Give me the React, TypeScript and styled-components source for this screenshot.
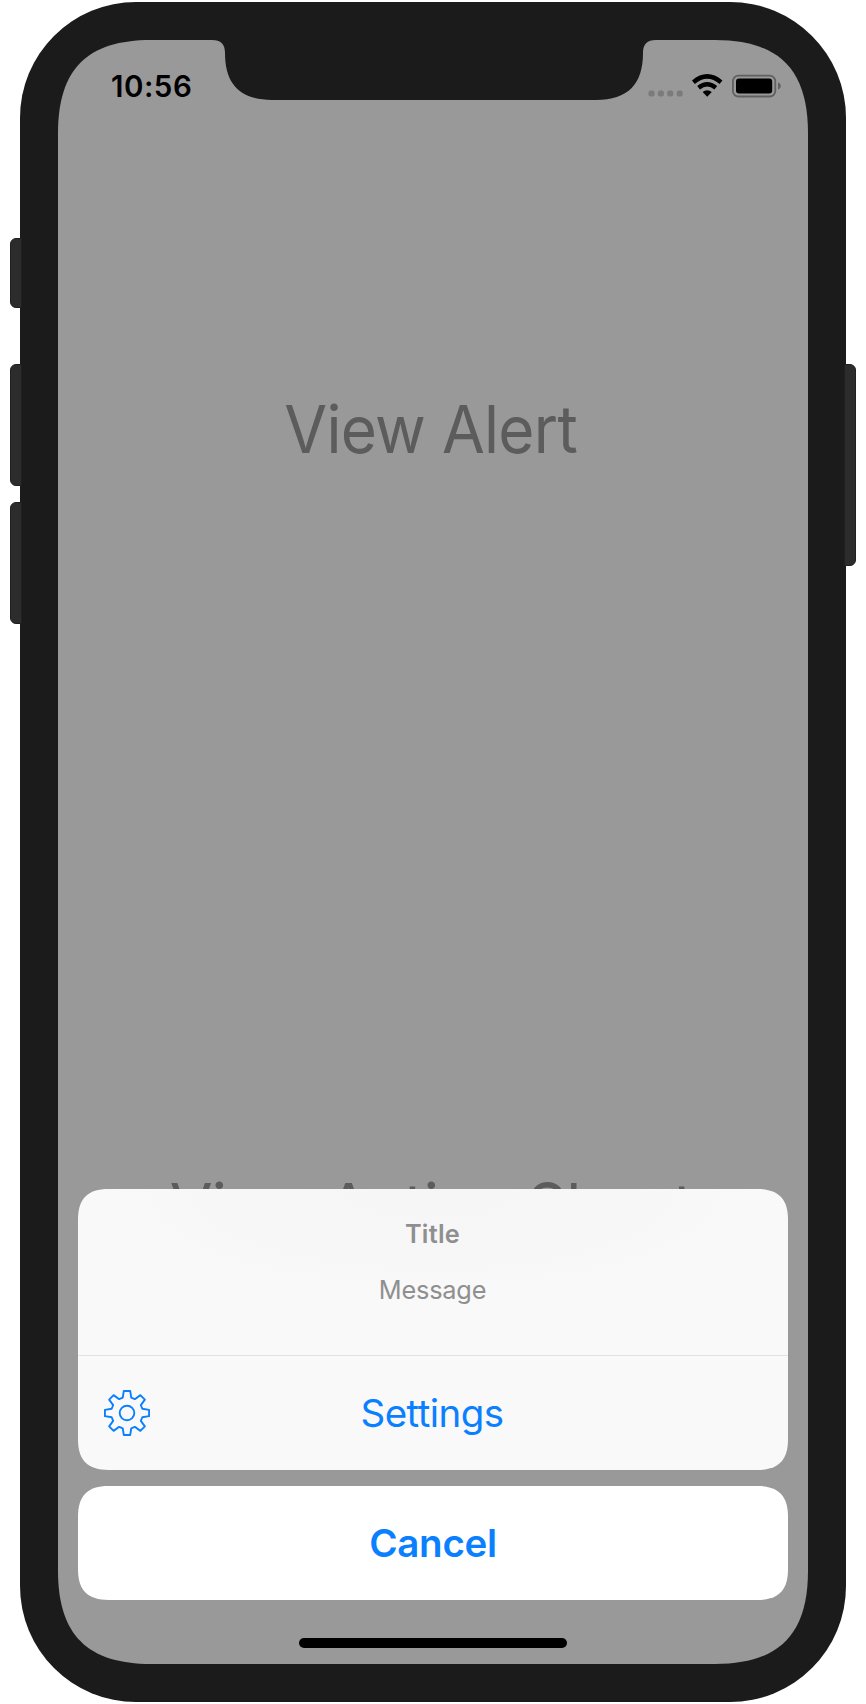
import React from "react";
import styled, { createGlobalStyle } from "styled-components";

/* Rounded rectangle whose corners ease into the straight edges, usable as a clip-path. */
const smoothRect = (w: number, h: number, r: number) => {
  const a = 1.18 * r;
  const c = 0.37 * r;
  return [
    `M${a} 0L${w - a} 0`,
    `C${w - c} 0 ${w} ${c} ${w} ${a}`,
    `L${w} ${h - a}`,
    `C${w} ${h - c} ${w - c} ${h} ${w - a} ${h}`,
    `L${a} ${h}`,
    `C${c} ${h} 0 ${h - c} 0 ${h - a}`,
    `L0 ${a}`,
    `C0 ${c} ${c} 0 ${a} 0Z`,
  ].join("");
};

const GlobalStyle = createGlobalStyle`
  * { box-sizing: border-box; }
  body { margin: 0; background: #fff; font-family: Inter, "Liberation Sans", sans-serif; }
  button { font: inherit; border: 0; padding: 0; background: none; cursor: pointer; }
`;

const Stage = styled.main`
  width: 866px;
  height: 1704px;
  padding: 2px 20px;
  overflow: hidden;
`;

const Device = styled.div`
  position: relative;
  height: 1700px;
  padding: 38px;
  border-radius: 116px;
  background: #1b1b1b;
`;

const SideKey = styled.span<{ $side: "left" | "right"; $top: number; $length: number }>`
  position: absolute;
  top: ${(p) => p.$top}px;
  ${(p) => p.$side}: -10px;
  width: 12px;
  height: ${(p) => p.$length}px;
  background: #2c2c2c;
  border: 1px solid #202020;
  border-radius: ${(p) => (p.$side === "left" ? "6px 0 0 6px" : "0 6px 6px 0")};
`;

const Screen = styled.div`
  position: relative;
  display: flex;
  flex-direction: column;
  height: 1624px;
  background: #999;
  clip-path: path("${smoothRect(750, 1624, 79)}");
`;

const Notch = styled.svg`
  position: absolute;
  top: 0;
  left: 154px;
`;

const StatusBar = styled.header`
  display: flex;
  justify-content: space-between;
  height: 88px;
  padding: 27px 27px 0 53px;
`;

const Clock = styled.time`
  font-size: 29.5px;
  line-height: 38px;
  font-weight: 600;
  letter-spacing: 0.5px;
  color: #000;
`;

const StatusIcons = styled.svg`
  display: block;
  margin-top: 5px;
`;

const Content = styled.section`
  display: grid;
  grid-template-rows: 778px 778px;
  height: 1536px;
  overflow: hidden;
`;

const ViewButton = styled.button`
  && {
    font-size: 66px;
    padding: 0 4px 176px 0;
  }
  line-height: 80px;
  letter-spacing: -0.75px;
  color: #5c5c5c;
  white-space: nowrap;
`;

const CondensedLabel = styled.span`
  display: inline-block;
  transform: scaleX(0.94);
`;

const SheetStack = styled.div`
  position: absolute;
  left: 20px;
  right: 20px;
  bottom: 16px;
  display: flex;
  flex-direction: column;
  align-items: center;
`;

const Panel = styled.div`
  width: 710px;
  height: 281px;
  background: radial-gradient(ellipse 330px 110px at 50% 0, #f6f6f6, #f7f7f7 60%, #f9f9f9 100%);
  clip-path: path("${smoothRect(710, 281, 26)}");
`;

const PanelHeader = styled.div`
  height: 167px;
  padding: 29px 1px 0 0;
  text-align: center;
  color: #8f8f8f;
  border-bottom: 1px solid #e2e2e2;
`;

const Title = styled.h1`
  margin: 0 0 24px;
  font-size: 25.3px;
  line-height: 32px;
  font-weight: 600;
  letter-spacing: 0.25px;
`;

const Message = styled.p`
  margin: 0;
  font-size: 25.3px;
  line-height: 32px;
  letter-spacing: -0.2px;
`;

const SettingsRow = styled.button`
  display: grid;
  grid-template-columns: 96px 1fr 98px;
  align-items: center;
  width: 100%;
  height: 114px;
  color: #0a80ff;
`;

const GearIcon = styled.svg`
  margin-left: 25px;
`;

const ActionLabel = styled.span<{ $bold?: boolean }>`
  font-size: 38.5px;
  line-height: 48px;
  font-weight: ${(p) => (p.$bold ? 600 : 400)};
  letter-spacing: ${(p) => (p.$bold ? -0.3 : -0.55)}px;
  color: #0a80ff;
`;

const CancelButton = styled.button`
  width: 710px;
  height: 114px;
  margin-top: 16px;
  && {
    background: #fff;
  }
  clip-path: path("${smoothRect(710, 114, 26)}");
`;

const HomeIndicator = styled.div`
  width: 268px;
  height: 10px;
  margin-top: 38px;
  border-radius: 5px;
  background: #000;
`;

const point = (radius: number, degrees: number) => {
  const t = (degrees * Math.PI) / 180;
  return `${(24 + radius * Math.sin(t)).toFixed(2)} ${(24 - radius * Math.cos(t)).toFixed(2)}`;
};

/* Eight narrow teeth with a flat root between neighbours. */
const gearPath =
  "M" +
  Array.from({ length: 8 }, (_, i) => {
    const m = i * 45;
    return [point(15.9, m - 15.5), point(22.3, m - 8.2), point(22.3, m + 8.2), point(15.9, m + 15.5)].join("L");
  }).join("L") +
  "Z";

export default function App() {
  return (
    <>
      <GlobalStyle />
      <Stage>
        <Device>
          <SideKey $side="left" $top={236} $length={70} />
          <SideKey $side="left" $top={362} $length={122} />
          <SideKey $side="left" $top={500} $length={122} />
          <SideKey $side="right" $top={362} $length={202} />
          <Screen>
            <Notch width="444" height="60" viewBox="0 0 444 60">
              <path
                fill="#1b1b1b"
                d="M0 0C9 0 13 4 13 13C13 44 28 60 60 60H384C416 60 431 44 431 13C431 4 435 0 444 0Z"
              />
            </Notch>
            <StatusBar>
              <Clock>10:56</Clock>
              <StatusIcons width="134" height="30" viewBox="0 0 134 30">
                <g fill="#7b7b7b">
                  {[1.5, 10.9, 20.2, 29.7].map((x) => (
                    <rect key={x} x={x} y="18.5" width="6" height="6" rx="2" />
                  ))}
                </g>
                <g fill="none" stroke="#000" strokeWidth="4.4">
                  <path d="M46.4 10.2Q60.2-1.4 74 10.2" />
                  <path d="M51.6 15.8Q60.2 8.8 68.8 15.8" />
                </g>
                <path d="M55.6 20Q60.2 16.6 64.8 20L60.2 24.8Z" />
                <rect x="85.9" y="3.7" width="42.4" height="20.8" rx="5.5" fill="none" stroke="#606060" strokeWidth="1.8" />
                <rect x="89" y="6.6" width="36.2" height="14.8" rx="3" />
                <path fill="#606060" d="M131 10.2q2.8 1 2.8 3.8t-2.8 3.8z" />
              </StatusIcons>
            </StatusBar>
            <Content>
              <ViewButton>
                <CondensedLabel>View Alert</CondensedLabel>
              </ViewButton>
              <ViewButton>
                <CondensedLabel>View Action Sheet</CondensedLabel>
              </ViewButton>
            </Content>
            <SheetStack>
              <Panel>
                <PanelHeader>
                  <Title>Title</Title>
                  <Message>Message</Message>
                </PanelHeader>
                <SettingsRow>
                  <GearIcon width="48" height="48" viewBox="0 0 48 48" fill="none" stroke="currentColor" strokeWidth="1.9">
                    <path d={gearPath} strokeLinejoin="round" />
                    <circle cx="24" cy="24" r="7.3" />
                  </GearIcon>
                  <ActionLabel>Settings</ActionLabel>
                </SettingsRow>
              </Panel>
              <CancelButton>
                <ActionLabel $bold>Cancel</ActionLabel>
              </CancelButton>
              <HomeIndicator />
            </SheetStack>
          </Screen>
        </Device>
      </Stage>
    </>
  );
}
